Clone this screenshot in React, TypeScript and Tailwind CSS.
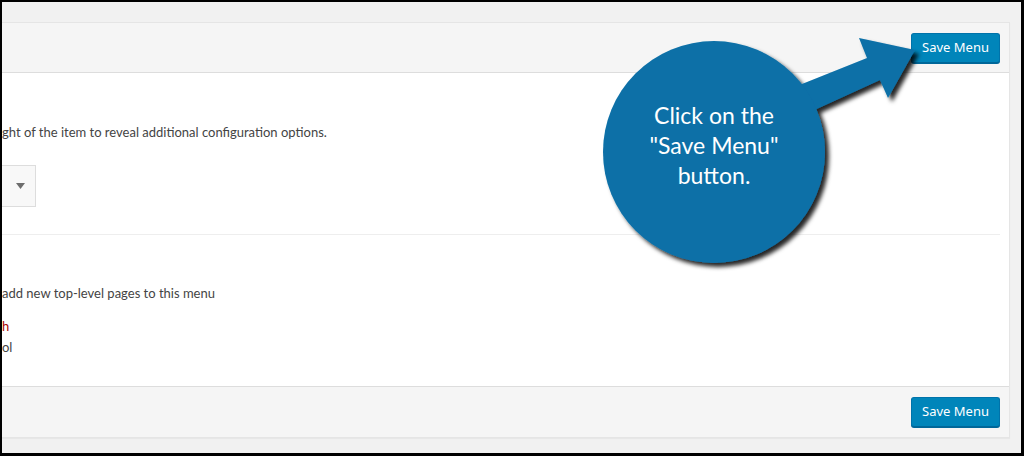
import React from "react";

function SaveButton() {
  return (
    <button
      className="h-[30px] w-[89px] rounded-[3px] border border-[#0073aa] border-b-[#006799] bg-[#0085ba] text-[13px] text-white shadow-[0_1px_0_#006799]"
      style={{ fontFamily: "'Noto Sans', 'Open Sans', sans-serif" }}
    >
      Save Menu
    </button>
  );
}

export default function App() {
  return (
    <div className="w-[1024px] h-[456px] bg-black pt-[2px] pl-[2px] pr-[3px] pb-[3px]">
      <div
        className="relative h-full w-full overflow-hidden bg-[#f1f1f1] pt-[20px] pr-[11px]"
        style={{ fontFamily: "'Noto Sans', 'Open Sans', sans-serif" }}
      >
        <div className="flex h-[416px] flex-col border-y border-r border-[#e5e5e5] bg-white shadow-[0_1px_1px_rgba(0,0,0,0.04)]">
          <div className="flex h-[50px] items-center justify-end border-b border-[#dddddd] bg-[#f5f5f5] pr-[9px]">
            <SaveButton />
          </div>
          <div
            className="flex flex-1 flex-col pr-[9px] text-[13px] text-[#444]"
            style={{ fontFamily: "Lato, 'Noto Sans', sans-serif" }}
          >
            <div className="mt-[50px] leading-[18px]">ght of the item to reveal additional configuration options.</div>
            <div className="mt-[24px] flex h-[42px] w-[34px] items-center border border-[#dddddd] border-l-0 bg-[#f8f8f8] pl-[14px]">
              <svg width="9" height="6" viewBox="0 0 9 6">
                <path d="M0 0 L9 0 L4.5 6 Z" fill="#6d6d6d" />
              </svg>
            </div>
            <div className="mt-[27px] h-px bg-[#eeeeee]" />
            <div className="mt-[49px] leading-[18px]">add new top-level pages to this menu</div>
            <div className="mt-[15px] leading-[18px] text-[#a00]">h</div>
            <div className="mt-[3px] leading-[18px]">ol</div>
          </div>
          <div className="flex h-[51px] items-center justify-end border-t border-[#dddddd] bg-[#f5f5f5] pr-[9px]">
            <SaveButton />
          </div>
        </div>

        {/* callout overlay */}
        <svg
          className="absolute left-0 top-0"
          width="1019"
          height="451"
          viewBox="0 0 1019 451"
        >
          <defs>
            <filter id="sh" x="-20%" y="-20%" width="140%" height="140%">
              <feDropShadow dx="4" dy="4" stdDeviation="2.2" floodColor="#000" floodOpacity="0.85" />
            </filter>
          </defs>
          <g filter="url(#sh)" fill="#0a6fa7">
            <path d="M790 86 L865 56 L857 36 L913 48 L886 96 L878 78 L808 110 Z" />
            <circle cx="712" cy="150" r="111" />
          </g>
        </svg>
        <div
          className="absolute left-[604px] top-[98px] w-[216px] text-center text-[23px] leading-[30px] text-white"
          style={{ fontFamily: "Lato, 'Open Sans', sans-serif" }}
        >
          Click on the
          <br />
          "Save Menu"
          <br />
          button.
        </div>
      </div>
    </div>
  );
}
